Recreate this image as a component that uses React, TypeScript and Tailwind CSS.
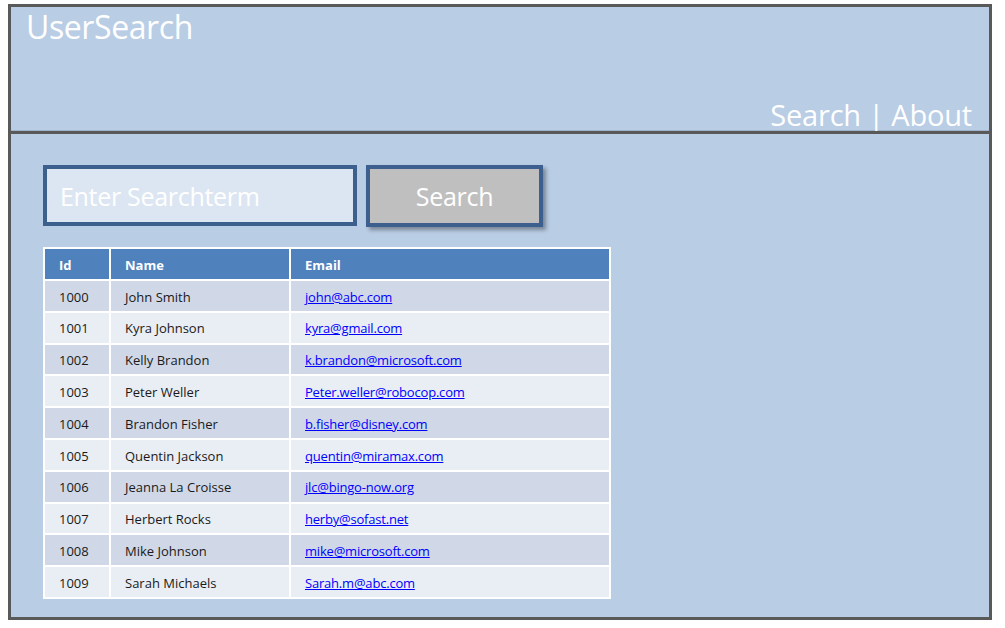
import React from "react";

const rows = [
  ["1000", "John Smith", "john@abc.com"],
  ["1001", "Kyra Johnson", "kyra@gmail.com"],
  ["1002", "Kelly Brandon", "k.brandon@microsoft.com"],
  ["1003", "Peter Weller", "Peter.weller@robocop.com"],
  ["1004", "Brandon Fisher", "b.fisher@disney.com"],
  ["1005", "Quentin Jackson", "quentin@miramax.com"],
  ["1006", "Jeanna La Croisse", "jlc@bingo-now.org"],
  ["1007", "Herbert Rocks", "herby@sofast.net"],
  ["1008", "Mike Johnson", "mike@microsoft.com"],
  ["1009", "Sarah Michaels", "Sarah.m@abc.com"],
];

export default function App() {
  return (
    <div
      className="w-[1005px] h-[628px] bg-white pt-[4px] pl-[8px]"
      style={{ fontFamily: '"Open Sans", "Noto Sans", sans-serif' }}
    >
      <div className="w-[984px] h-[616px] border-[3px] border-[#595959] bg-[#b9cde5] flex flex-col">
        <div className="h-[124px] flex flex-col justify-between border-b border-[#9fb3cc]">
          <div className="pl-[15px] pt-[1px] text-[32px] leading-[38px] text-white tracking-[-0.4px]">
            UserSearch
          </div>
          <div className="flex justify-end pr-[17px] text-[29px] leading-[30px] text-white tracking-[-0.2px]">
            Search | About
          </div>
        </div>
        <div className="h-[3px] bg-[#595959]" />
        <div className="pl-[32px] pt-[31px] flex flex-col">
          <div className="flex gap-[9px]">
            <div className="w-[314px] h-[61px] border-[4px] border-[#3c5f8e] bg-[#dce6f2] flex items-center pl-[13px] pt-[2px] text-[25px] text-white tracking-[-0.3px]">
              Enter Searchterm
            </div>
            <div className="w-[177px] h-[62px] border-[4px] border-[#3c5f8e] bg-[#bfbfbf] flex items-center justify-center pt-[2px] text-[25px] text-white shadow-[3px_3px_4px_rgba(0,0,0,0.35)] tracking-[-0.3px]">
              Search
            </div>
          </div>
          <div className="mt-[20px] w-[568px] border-2 border-white bg-white text-[13px] text-[#1a1a1a]">
            <div className="flex h-[30px] bg-[#4f81bd] text-white font-bold">
              <div className="w-[64px] pl-[14px] pt-[3px] flex items-center">Id</div>
              <div className="w-[2px] bg-white" />
              <div className="w-[178px] pl-[14px] pt-[3px] flex items-center">Name</div>
              <div className="w-[2px] bg-white" />
              <div className="flex-1 pl-[14px] pt-[3px] flex items-center">Email</div>
            </div>
            <div className="h-[2px]" />
            {rows.map((r, i) => (
              <div
                key={r[0]}
                className={`flex h-[29.8px] ${i > 0 ? "mt-[2px]" : ""} ${
                  i % 2 === 0 ? "bg-[#d0d8e8]" : "bg-[#e9edf4]"
                }`}
              >
                <div className="w-[64px] pl-[14px] pt-[3px] flex items-center">{r[0]}</div>
                <div className="w-[2px] bg-white" />
                <div className="w-[178px] pl-[14px] pt-[3px] flex items-center">{r[1]}</div>
                <div className="w-[2px] bg-white" />
                <div className="flex-1 pl-[14px] pt-[3px] flex items-center">
                  <span className="text-[#0000ff] underline tracking-[-0.2px]">{r[2]}</span>
                </div>
              </div>
            ))}
          </div>
        </div>
      </div>
    </div>
  );
}
